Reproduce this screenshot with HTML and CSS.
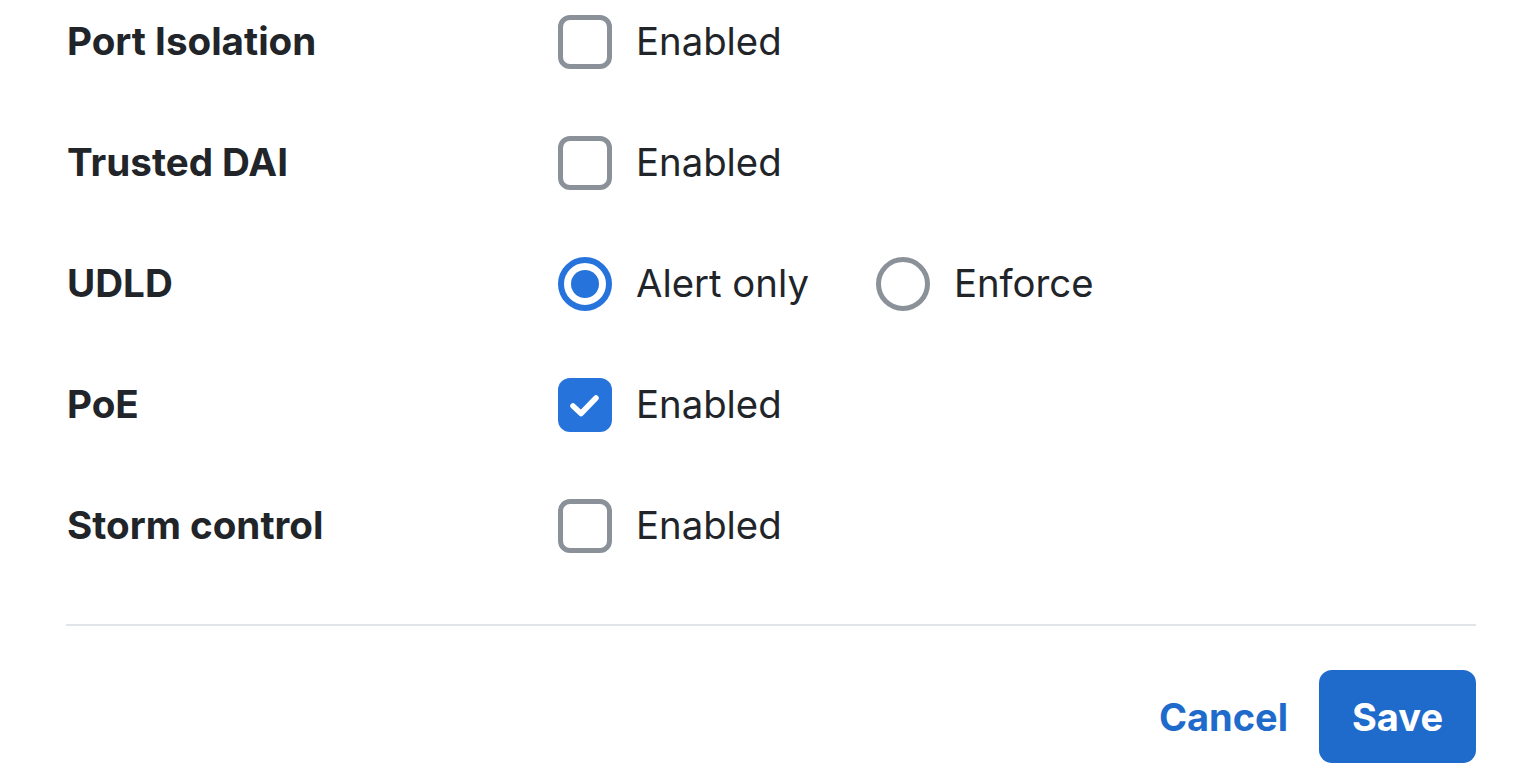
FILE: index.html
```html
<!DOCTYPE html>
<html lang="en">
<head>
<meta charset="utf-8">
<title>Port settings</title>
<link rel="stylesheet" href="styles.css">
</head>
<body>
<form class="form">
  <div class="rows">
    <div class="row">
      <div class="label">Port Isolation</div>
      <div class="controls">
        <label class="opt"><span class="box"></span><span class="opt-text">Enabled</span></label>
      </div>
    </div>
    <div class="row">
      <div class="label">Trusted DAI</div>
      <div class="controls">
        <label class="opt"><span class="box"></span><span class="opt-text">Enabled</span></label>
      </div>
    </div>
    <div class="row">
      <div class="label">UDLD</div>
      <div class="controls">
        <label class="opt"><span class="radio on"><span class="dot"></span></span><span class="opt-text">Alert only</span></label>
        <label class="opt"><span class="radio"></span><span class="opt-text">Enforce</span></label>
      </div>
    </div>
    <div class="row">
      <div class="label">PoE</div>
      <div class="controls">
        <label class="opt"><span class="box checked"><svg viewBox="0 0 54 54" width="54" height="54"><polyline points="15,28 23,35.5 38,20" fill="none" stroke="#fff" stroke-width="5.5" stroke-linecap="round" stroke-linejoin="round"/></svg></span><span class="opt-text">Enabled</span></label>
      </div>
    </div>
    <div class="row">
      <div class="label">Storm control</div>
      <div class="controls">
        <label class="opt"><span class="box"></span><span class="opt-text">Enabled</span></label>
      </div>
    </div>
  </div>
  <div class="divider"></div>
  <div class="actions">
    <span class="cancel">Cancel</span>
    <span class="save">Save</span>
  </div>
</form>
</body>
</html>
```
FILE: styles.css
```css
html, body {
  margin: 0;
  padding: 0;
  background: #fff;
}
body {
  font-family: Inter, "Noto Sans", sans-serif;
  color: #212529;
}
.form {
  padding: 15px 40px 0 66px;
}
.rows {
  display: flex;
  flex-direction: column;
  gap: 67px;
}
.row {
  display: grid;
  grid-template-columns: 492px 1fr;
  align-items: center;
  height: 54px;
}
.label {
  font-size: 38.6px;
  font-weight: 700;
  padding-left: 1px;
  margin-top: -2px;
}
.controls {
  display: flex;
  align-items: center;
  gap: 67px;
}
.opt {
  display: flex;
  align-items: center;
  gap: 24px;
}
.opt-text {
  font-size: 38.3px;
  font-weight: 400;
  margin-top: -2px;
}
.box {
  width: 54px;
  height: 54px;
  box-sizing: border-box;
  border: 5px solid #8a9199;
  border-radius: 12px;
  display: block;
}
.box.checked {
  border: none;
  background: #2673db;
}
.box svg {
  display: block;
}
.radio {
  width: 54px;
  height: 54px;
  box-sizing: border-box;
  border: 5px solid #8a9199;
  border-radius: 50%;
  display: flex;
  align-items: center;
  justify-content: center;
}
.radio.on {
  border: 6px solid #2673db;
}
.dot {
  width: 28px;
  height: 28px;
  border-radius: 50%;
  background: #2673db;
}
.divider {
  margin-top: 71px;
  height: 2px;
  background: #e1e4e8;
}
.actions {
  display: flex;
  justify-content: flex-end;
  align-items: center;
  gap: 31px;
  margin-top: 44px;
}
.cancel {
  color: #1f6bcc;
  font-size: 38px;
  font-weight: 700;
}
.save {
  background: #1f6bcc;
  color: #fff;
  font-size: 38px;
  font-weight: 700;
  width: 157px;
  height: 93px;
  border-radius: 13px;
  display: flex;
  align-items: center;
  justify-content: center;
}
```
